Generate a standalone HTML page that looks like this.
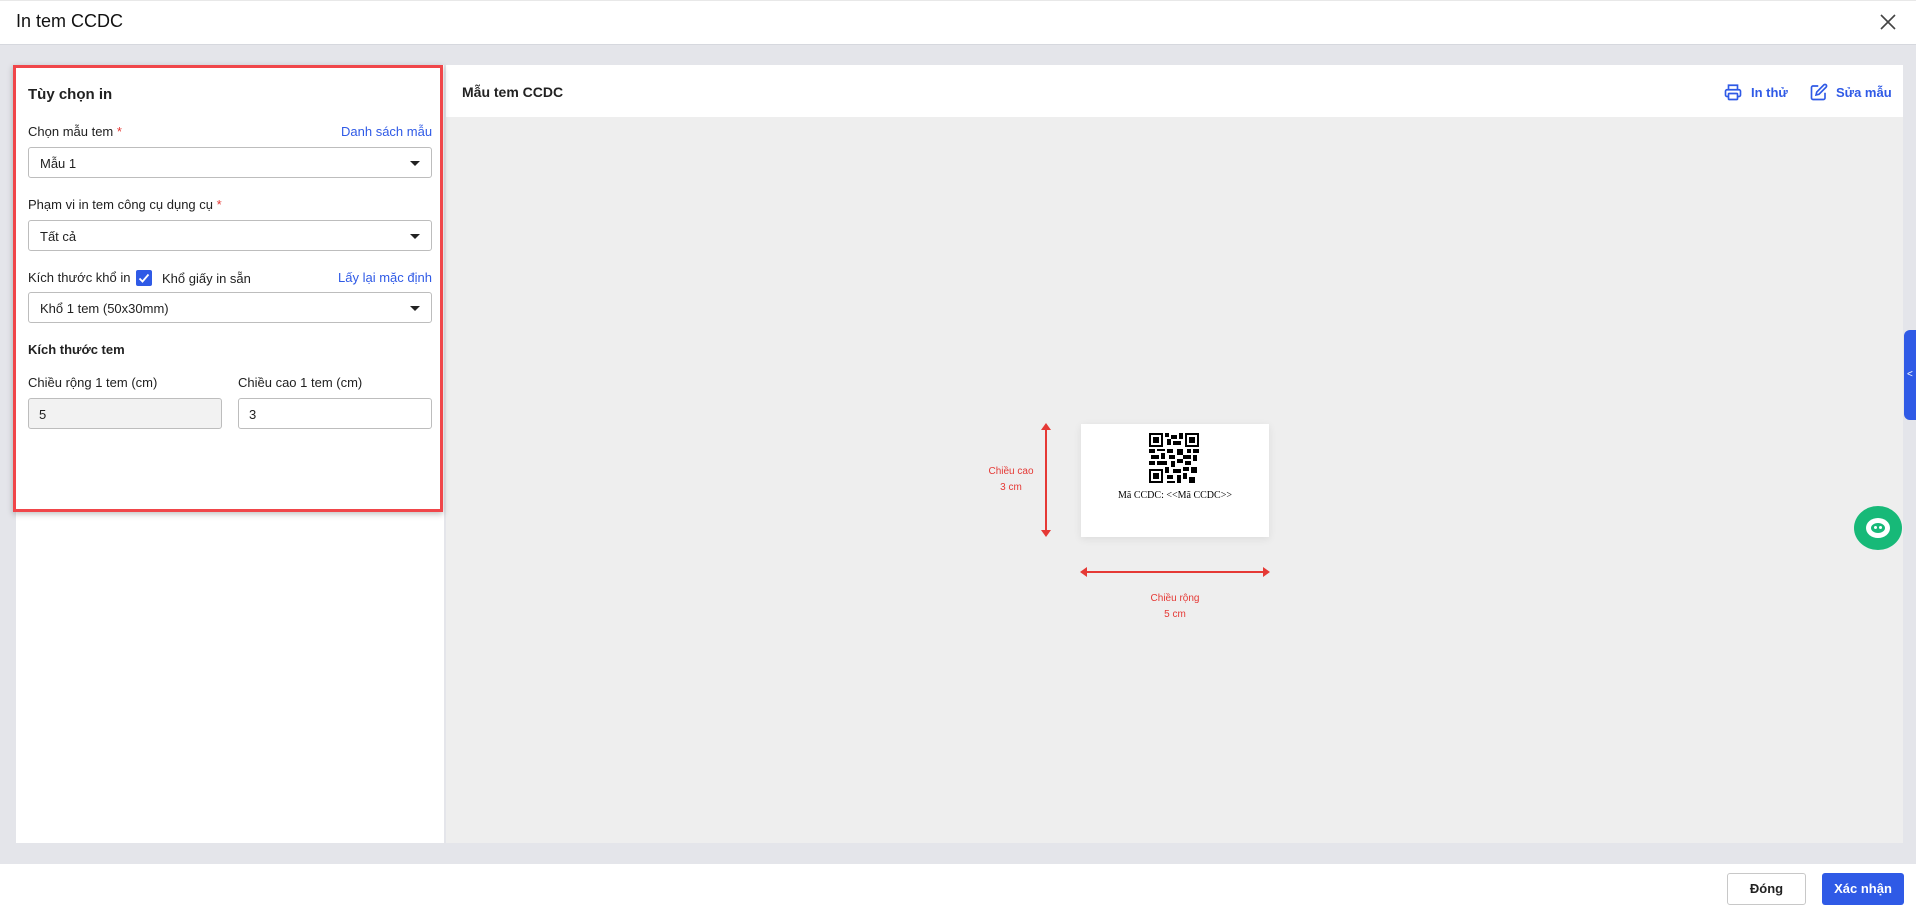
<!DOCTYPE html>
<html><head><meta charset="utf-8"><style>
*{box-sizing:border-box;margin:0;padding:0}
body{width:1916px;height:910px;overflow:hidden;background:#e4e5ea;font-family:"Liberation Sans",Arial,sans-serif;color:#212121;position:relative;font-size:13px}
.abs{position:absolute;white-space:nowrap}
.hdr{left:0;top:0;width:1916px;height:45px;background:#fff;border-bottom:1px solid #d6d8de;border-top:1px solid #e8e8e8}
.title{left:16px;top:11px;font-size:18px;font-weight:500;color:#111}
.left{left:16px;top:65px;width:428px;height:778px;background:#fff}
.red{left:13px;top:65px;width:430px;height:447px;border:3px solid #f0464a;box-shadow:0 2px 6px rgba(0,0,0,.25)}
.right{left:446px;top:65px;width:1457px;height:778px;background:#eeeeee}
.rh{left:446px;top:65px;width:1457px;height:52px;background:#fff}
.sel{position:absolute;white-space:nowrap;left:28px;width:404px;height:31px;border:1px solid #bdbdbd;border-radius:3px;background:#fff;padding:8px 11px;font-size:13px}
.sel:after{content:"";position:absolute;right:11px;top:13px;border-left:5px solid transparent;border-right:5px solid transparent;border-top:5px solid #222}
.lbl{position:absolute;white-space:nowrap;font-size:13px;color:#212121}
.req{color:#e53935}
.link{position:absolute;white-space:nowrap;color:#2f5ae6;font-size:13px}
.inp{position:absolute;height:31px;border:1px solid #bdbdbd;border-radius:3px;padding:8px 10px;font-size:13px}
.foot{left:0;top:864px;width:1916px;height:46px;background:#fff}
.btn{position:absolute;top:873px;height:32px;border-radius:3px;font-size:13px;font-weight:bold;text-align:center;line-height:30px;white-space:nowrap}
.red-t{position:absolute;color:#e53935;font-size:10px;text-align:center;width:60px;white-space:nowrap}
</style></head><body>
<div class="abs hdr"></div>
<div class="abs title">In tem CCDC</div>
<svg class="abs" style="left:1880px;top:14px" width="16" height="16" viewBox="0 0 16 16"><path d="M1 1L15 15M15 1L1 15" stroke="#444" stroke-width="1.6"/></svg>

<div class="abs left"></div>
<div class="abs right"></div>
<div class="abs rh"></div>
<div class="abs" style="left:462px;top:84px;font-size:14px;font-weight:bold;color:#222">Mẫu tem CCDC</div>
<svg class="abs" style="left:1724px;top:83px" width="18" height="18" viewBox="0 0 24 24" fill="none" stroke="#2f5ae6" stroke-width="2.2"><path d="M6 9V3h12v6M6 18H4a2 2 0 0 1-2-2v-5a2 2 0 0 1 2-2h16a2 2 0 0 1 2 2v5a2 2 0 0 1-2 2h-2"/><rect x="6" y="14" width="12" height="8" rx="1"/></svg>
<div class="abs" style="left:1751px;top:85px;color:#2f5ae6;font-weight:bold;font-size:13px">In thử</div>
<svg class="abs" style="left:1810px;top:83px" width="18" height="18" viewBox="0 0 24 24" fill="none" stroke="#2f5ae6" stroke-width="2.2"><path d="M11 4H4a2 2 0 0 0-2 2v14a2 2 0 0 0 2 2h14a2 2 0 0 0 2-2v-7"/><path d="M18.5 2.5a2.1 2.1 0 0 1 3 3L12 15l-4 1 1-4z"/></svg>
<div class="abs" style="left:1836px;top:85px;color:#2f5ae6;font-weight:bold;font-size:13px">Sửa mẫu</div>

<div class="lbl" style="left:28px;top:86px;font-size:15px;font-weight:bold">Tùy chọn in</div>
<div class="lbl" style="left:28px;top:124px">Chọn mẫu tem <span class="req">*</span></div>
<div class="link" style="left:341px;top:124px">Danh sách mẫu</div>
<div class="sel" style="top:147px">Mẫu 1</div>
<div class="lbl" style="left:28px;top:197px">Phạm vi in tem công cụ dụng cụ <span class="req">*</span></div>
<div class="sel" style="top:220px">Tất cả</div>
<div class="lbl" style="left:28px;top:270px">Kích thước khổ in</div>
<div class="abs" style="left:136px;top:270px;width:16px;height:16px;background:#2f5ae6;border-radius:2px"><svg width="16" height="16" viewBox="0 0 16 16"><path d="M3.5 8.5l3 3 6-7" stroke="#fff" stroke-width="1.8" fill="none"/></svg></div>
<div class="lbl" style="left:162px;top:271px">Khổ giấy in sẵn</div>
<div class="link" style="left:338px;top:270px">Lấy lại mặc định</div>
<div class="sel" style="top:292px">Khổ 1 tem (50x30mm)</div>
<div class="lbl" style="left:28px;top:342px;font-weight:bold">Kích thước tem</div>
<div class="lbl" style="left:28px;top:375px">Chiều rộng 1 tem (cm)</div>
<div class="lbl" style="left:238px;top:375px">Chiều cao 1 tem (cm)</div>
<div class="inp" style="left:28px;top:398px;width:194px;background:#f2f2f2">5</div>
<div class="inp" style="left:238px;top:398px;width:194px;background:#fff">3</div>
<div class="abs red"></div>

<div class="abs" style="left:1081px;top:424px;width:188px;height:113px;background:#fff;box-shadow:0 2px 8px rgba(0,0,0,.08)"></div>
<svg class="abs" style="left:1148px;top:433px" width="52" height="50" viewBox="0 0 25 25" shape-rendering="crispEdges">
<path fill="#000" d="M0 0h7v7H0zM18 0h7v7h-7zM0 18h7v7H0z"/>
<path fill="#fff" d="M1 1h5v5H1zM19 1h5v5h-5zM1 19h5v5H1z"/>
<path fill="#000" d="M2 2h3v3H2zM20 2h3v3h-3zM2 20h3v3H2zM8 0h2v2H8zM11 1h3v2h-3zM15 0h2v3h-2zM9 3h2v3H9zM12 4h4v2h-4zM0 8h3v2H0zM4 8h4v1H4zM9 8h3v2H9zM14 8h3v3h-3zM19 8h2v2h-2zM22 8h3v2h-3zM1 11h4v2H1zM6 10h2v3H6zM10 11h3v2h-3zM17 11h4v2h-4zM22 11h2v3h-2zM0 14h3v2H0zM4 14h5v2H4zM11 14h2v3h-2zM14 13h3v2h-3zM18 14h3v2h-3zM8 17h2v3H8zM12 18h4v2h-4zM17 17h3v2h-3zM21 17h3v3h-3zM9 21h3v2H9zM14 21h2v4h-2zM17 20h2v3h-2zM20 22h3v3h-3zM9 24h4v1H9z"/>
</svg>
<div class="abs" style="left:1081px;top:490px;width:188px;text-align:center;font-family:'Liberation Serif',serif;font-size:10px;color:#000">Mã CCDC: &lt;&lt;Mã CCDC&gt;&gt;</div>
<svg class="abs" style="left:1038px;top:422px" width="16" height="116"><path d="M8 4V112" stroke="#e53935" stroke-width="2"/><path d="M3 8L8 1L13 8z M3 108L8 115L13 108z" fill="#e53935"/></svg>
<svg class="abs" style="left:1079px;top:565px" width="192" height="14"><path d="M4 7H188" stroke="#e53935" stroke-width="2"/><path d="M8 2L1 7L8 12z M184 2L191 7L184 12z" fill="#e53935"/></svg>
<div class="red-t" style="left:981px;top:466px">Chiều cao</div>
<div class="red-t" style="left:981px;top:482px">3 cm</div>
<div class="red-t" style="left:1145px;top:593px">Chiều rộng</div>
<div class="red-t" style="left:1145px;top:609px">5 cm</div>

<div class="abs" style="left:1904px;top:330px;width:14px;height:90px;background:#2f5ae6;border-radius:6px 0 0 6px;color:#fff;font-size:10px;line-height:90px;padding-left:3px">&lt;</div>
<div class="abs" style="left:1854px;top:506px;width:48px;height:44px;border-radius:50%;background:#17b978"><div style="position:absolute;left:12px;top:12px;width:24px;height:20px;border-radius:50%;background:#fff"></div><div style="position:absolute;left:17px;top:17px;width:14px;height:10px;border-radius:50%;background:#17b978"></div><div style="position:absolute;left:20px;top:20px;width:3px;height:3px;background:#fff;border-radius:50%"></div><div style="position:absolute;left:25px;top:20px;width:3px;height:3px;background:#fff;border-radius:50%"></div></div>

<div class="abs foot"></div>
<div class="btn" style="left:1727px;width:79px;border:1px solid #c8c8c8;background:#fff;color:#222">Đóng</div>
<div class="btn" style="left:1822px;width:82px;background:#2f5ae6;color:#fff;line-height:32px">Xác nhận</div>
</body></html>
